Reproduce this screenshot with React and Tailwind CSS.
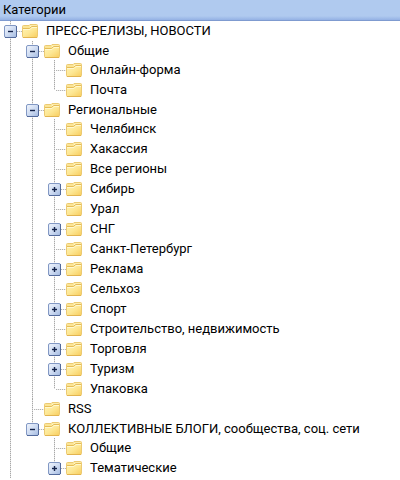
import React, { useState } from "react";

const categories = [
  {
    name: "ПРЕСС-РЕЛИЗЫ, НОВОСТИ",
    open: true,
    children: [
      {
        name: "Общие",
        open: true,
        children: [{ name: "Онлайн-форма" }, { name: "Почта" }],
      },
      {
        name: "Региональные",
        open: true,
        children: [
          { name: "Челябинск" },
          { name: "Хакассия" },
          { name: "Все регионы" },
          { name: "Сибирь", children: [] },
          { name: "Урал" },
          { name: "СНГ", children: [] },
          { name: "Санкт-Петербург" },
          { name: "Реклама", children: [] },
          { name: "Сельхоз" },
          { name: "Спорт", children: [] },
          { name: "Строительство, недвижимость" },
          { name: "Торговля", children: [] },
          { name: "Туризм", children: [] },
          { name: "Упаковка" },
        ],
      },
      { name: "RSS" },
      {
        name: "КОЛЛЕКТИВНЫЕ БЛОГИ, сообщества, соц. сети",
        open: true,
        children: [{ name: "Общие" }, { name: "Тематические", children: [] }],
      },
    ],
  },
];

const FolderIcon = () => (
  <svg width="16" height="14" viewBox="0 0 16 14" className="shrink-0">
    <defs>
      <linearGradient id="folder" x1="0" y1="0" x2="1" y2="1">
        <stop offset="0" stopColor="#fff3b0" />
        <stop offset="0.5" stopColor="#fde794" />
        <stop offset="1" stopColor="#f8cf62" />
      </linearGradient>
    </defs>
    <path
      d="M.5 12.5V2.5q0-1 1-1h5.5L8 .5h6.5q1 0 1 1v11q0 1-1 1h-13q-1 0-1-1z"
      fill="#fbe596"
      stroke="#ecca72"
    />
    <path d="M8.5 1.5h6V3H7.5z" fill="#fff6c8" />
    <path
      d="M1 5.5h6.5l2-2H15v9q0 .5-.5.5h-13q-.5 0-.5-.5z"
      fill="url(#folder)"
    />
    <path d="M1 4.5h6.5l2-2H15" fill="none" stroke="#e6bd58" />
    <path d="M1 5.5h7l2-2h5" fill="none" stroke="#fff8cf" />
    <path d="M1 13.5h14" stroke="#e2b450" />
  </svg>
);

const ToggleIcon = ({ open }) => (
  <svg width="13" height="13" viewBox="0 0 13 13">
    <defs>
      <linearGradient id="toggle" x1="0" y1="0" x2="1" y2="1">
        <stop offset="0" stopColor="#f2f6fd" />
        <stop offset="0.5" stopColor="#cfdcf2" />
        <stop offset="1" stopColor="#a2b9e0" />
      </linearGradient>
    </defs>
    <rect
      x=".5"
      y=".5"
      width="12"
      height="12"
      rx="1.5"
      fill="url(#toggle)"
      stroke="#8298c4"
    />
    <path d="M1 12.5h11M12.5 1v11" stroke="#536a9c" />
    <path d="M4 6.5h5" stroke="#14234a" strokeWidth="1.4" />
    {!open && <path d="M6.5 4v5" stroke="#14234a" strokeWidth="1.4" />}
  </svg>
);

const TreeNode = ({ node, last, nested }) => {
  const [open, setOpen] = useState(Boolean(node.open));

  return (
    <li className="grid grid-cols-[22px_1fr]">
      <div
        className={`bg-[repeating-linear-gradient(#a8a8a8_0_1px,#e2e2e2_1px_2px)] bg-no-repeat bg-position-[10px_0] ${
          last ? "bg-size-[1px_10px]" : "bg-size-[1px_100%]"
        }`}
      >
        <div
          className={`flex h-5 items-center ${node.children ? "pl-1" : "pl-3"}`}
        >
          {node.children && (
            <button
              type="button"
              aria-label={node.name}
              aria-expanded={open}
              onClick={() => setOpen(!open)}
              className="shrink-0 cursor-pointer"
            >
              <ToggleIcon open={open} />
            </button>
          )}
          <span className="h-px flex-1 bg-[repeating-linear-gradient(90deg,#b4b4b4_0_1px,#ececec_1px_2px)]" />
        </div>
      </div>
      <div className="min-w-0">
        <div className="flex h-5 items-center gap-2 whitespace-nowrap">
          <FolderIcon />
          <span>{node.name}</span>
        </div>
        {open && node.children.length > 0 && (
          <ul className={nested ? "-mt-px" : ""}>
            {node.children.map((child, index) => (
              <TreeNode
                key={child.name}
                node={child}
                last={index === node.children.length - 1}
                nested
              />
            ))}
          </ul>
        )}
      </div>
    </li>
  );
};

const App = () => {
  return (
    <div className="min-h-screen bg-white font-['Roboto','Liberation_Sans',sans-serif] text-[13px] leading-5 text-black">
      <h1 className="border-b border-[#7f9bd0] bg-linear-to-b from-[#b0caef] from-80% to-[#94b1e4] px-[3px]">
        Категории
      </h1>
      <ul>
        {categories.map((node) => (
          <TreeNode key={node.name} node={node} />
        ))}
      </ul>
    </div>
  );
};

export default App;
